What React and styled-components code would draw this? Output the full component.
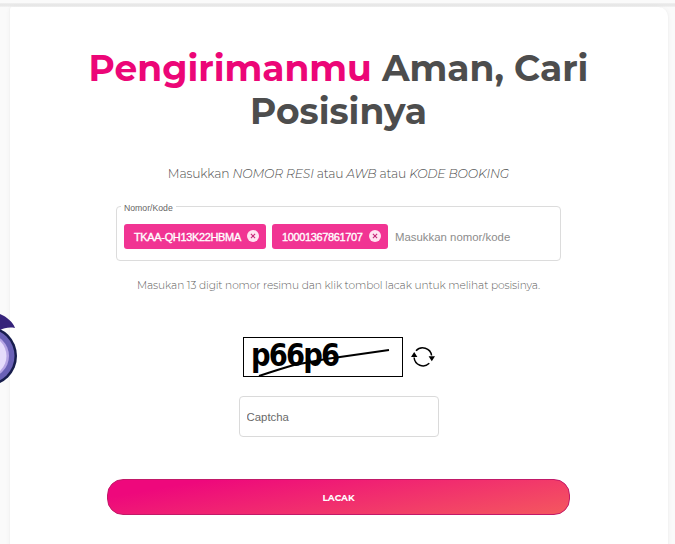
import React from "react";
import styled, { createGlobalStyle } from "styled-components";

const GlobalStyle = createGlobalStyle`
  * { box-sizing: border-box; }
  body { margin: 0; background: #fafafa; font-family: "Liberation Sans", Arial, sans-serif; overflow: hidden; }
`;

const Page = styled.main`
  position: relative;
  height: 544px;
  overflow: hidden;
  padding: 3px 6px 0 9px;
  background: #fafafa;
`;

const TopShade = styled.div`
  height: 4px;
  margin: 0 -6px 0 -9px;
  background: linear-gradient(#f0f0f0, #e6e6e6 50%, #f3f3f3);
`;

const Card = styled.section`
  display: flex;
  flex-direction: column;
  align-items: center;
  width: 660px;
  height: 560px;
  padding: 40px 1px 0 0;
  background: #fff;
  border: 1px solid #f3f3f3;
  border-top: 0;
  border-radius: 3px 10px 0 0;
  box-shadow: 0 0 4px rgba(0, 0, 0, 0.03);
`;

const Title = styled.h1`
  margin: 0;
  width: 520px;
  text-align: center;
  font: 700 36px/43px Montserrat, Inter, sans-serif;
  color: #4d4d4d;
`;

const Accent = styled.span`
  color: #ec0677;
`;

const Lead = styled.p`
  margin: 31px 0 0;
  white-space: nowrap;
  font: 300 12.3px/20px Montserrat, Inter, sans-serif;
  letter-spacing: -0.14px;
  color: #4c4c4c;
`;

const Field = styled.fieldset`
  display: flex;
  align-items: flex-start;
  position: relative;
  width: 445px;
  height: 55px;
  margin: 22px 0 0;
  padding: 17px 7px 0;
  border: 1px solid #dcdcdc;
  border-radius: 4px;
`;

const FieldLabel = styled.label`
  position: absolute;
  top: -4px;
  left: 4px;
  padding: 0 3px;
  background: #fff;
  font-size: 8.7px;
  line-height: 10px;
  color: #666;
`;

const Chip = styled.span`
  display: flex;
  align-items: center;
  justify-content: space-between;
  width: ${(p) => p.$width}px;
  height: 25px;
  margin-right: 6px;
  padding: 1px 7px 0 10px;
  border-radius: 3px;
  background: #f13493;
  color: #fff;
  font-size: 11px;
  letter-spacing: ${(p) => p.$spacing}px;
  -webkit-text-stroke: 0.35px #fff;
  white-space: nowrap;
`;

const ChipIcon = styled.svg`
  flex: none;
  width: 12px;
  height: 12px;
  margin-top: -2px;
`;

const FieldInput = styled.input`
  width: 150px;
  height: 25px;
  padding: 1px 0 0 1px;
  border: 0;
  outline: 0;
  background: transparent;
  font: 11.4px "Liberation Sans", Arial, sans-serif;
  &::placeholder { color: #8c8c8c; opacity: 1; }
`;

const Hint = styled.p`
  margin: 17px 0 0;
  white-space: nowrap;
  font: 300 10.6px/15px Montserrat, Inter, sans-serif;
  letter-spacing: -0.09px;
  color: #606060;
`;

const CaptchaRow = styled.div`
  display: flex;
  align-items: center;
  width: 192px;
  margin-top: 44px;
`;

const CaptchaBox = styled.svg`
  width: 160px;
  height: 40px;
  border: 1px solid #000;
`;

const RefreshIcon = styled.svg`
  width: 24px;
  height: 22px;
  margin-left: 8px;
`;

const CaptchaInput = styled.input`
  width: 200px;
  height: 41px;
  margin-top: 19px;
  padding: 1px 7px 0;
  border: 1px solid #dadada;
  border-radius: 4px;
  outline: 0;
  font: 11.4px "Liberation Sans", Arial, sans-serif;
  &::placeholder { color: #696969; opacity: 1; }
`;

const Submit = styled.button`
  width: 463px;
  height: 36px;
  margin-top: 42px;
  padding: 1px 0 0;
  border: 1px solid #c21968;
  border-radius: 16px;
  background: linear-gradient(170deg, #ee087c 15%, #f4565f 98%);
  color: #fff;
  font: 700 9px/12px Montserrat, Inter, sans-serif;
`;

const Mascot = styled.svg`
  position: absolute;
  left: 0;
  top: 310px;
  width: 20px;
  height: 80px;
`;

function CodeChip({ children, width, spacing }) {
  return (
    <Chip $width={width} $spacing={spacing}>
      {children}
      <ChipIcon viewBox="0 0 12 12">
        <circle cx="6" cy="6" r="6" fill="#ffe5f2" />
        <path d="M3.9 3.9l4.2 4.2M8.1 3.9L3.9 8.1" stroke="#c72779" strokeWidth="1.1" />
      </ChipIcon>
    </Chip>
  );
}

export default function App() {
  return (
    <Page>
      <GlobalStyle />
      <TopShade />
      <Card>
        <Title><Accent>Pengirimanmu</Accent> Aman, Cari<br />Posisinya</Title>
        <Lead>Masukkan <i>NOMOR RESI</i> atau <i>AWB</i> atau <i>KODE BOOKING</i></Lead>
        <Field>
          <FieldLabel>Nomor/Kode</FieldLabel>
          <CodeChip width={142} spacing={-0.35}>TKAA-QH13K22HBMA</CodeChip>
          <CodeChip width={116} spacing={-0.37}>10001367861707</CodeChip>
          <FieldInput placeholder="Masukkan nomor/kode" />
        </Field>
        <Hint>Masukan 13 digit nomor resimu dan klik tombol lacak untuk melihat posisinya.</Hint>
        <CaptchaRow>
          <CaptchaBox viewBox="0 0 158 38">
            <text
              transform="translate(7 28) scale(.87 1)"
              fontFamily="DejaVu Sans"
              fontWeight="700"
              fontSize="31.5"
              letterSpacing="-2.1"
            >
              p66p6
            </text>
            <path d="M15 38Q36 31 50 27Q66 24 82 21L145 12" fill="none" stroke="#000" strokeWidth="2" />
          </CaptchaBox>
          <RefreshIcon viewBox="0 0 24 22">
            <g fill="none" stroke="#000" strokeWidth="1.5">
              <path d="M5 4.8A9 9 0 0 1 20.6 9.5" />
              <path d="M3.1 11.5A9 9 0 0 0 18.3 17.3" />
            </g>
            <path d="M0 11L3.2 6L6.4 11ZM17.6 10.3H24L20.8 15.2Z" />
          </RefreshIcon>
        </CaptchaRow>
        <CaptchaInput placeholder="Captcha" />
        <Submit>LACAK</Submit>
      </Card>
      <Mascot viewBox="0 0 20 80">
        <circle cx="-13" cy="46" r="30" fill="#171d4d" />
        <circle cx="-13" cy="46" r="27.5" fill="#6a61b6" />
        <circle cx="-13" cy="46" r="22" fill="#b5a4e4" />
        <circle cx="-14" cy="46" r="20.5" fill="#e5dcfb" />
        <path d="M0 4C7 7 13 12 15 18C9 17 4 18 0 20Z" fill="#35227a" />
      </Mascot>
    </Page>
  );
}
